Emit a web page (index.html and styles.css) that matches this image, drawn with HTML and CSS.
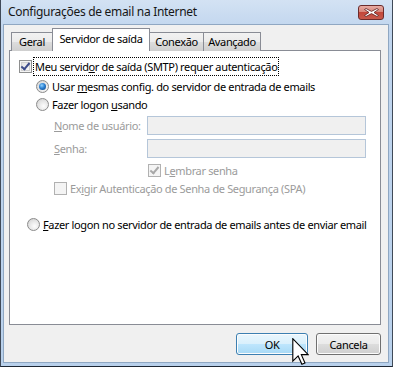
FILE: index.html
```html
<!DOCTYPE html>
<html lang="pt">
<head>
    <meta charset="UTF-8">
    <title>Configurações de email na Internet</title>
    <link rel="stylesheet" href="styles.css">
</head>
<body>
    <div class="window">
        <div class="titlebar">
            <span class="title">Configurações de email na Internet</span>
            <div class="close-button">
                <svg width="15" height="9" viewBox="0 0 15 9">
                    <path d="M2 0.5 L7.5 3.4 L13 0.5 L14.5 1.5 L10 4.5 L14.5 7.5 L13 8.5 L7.5 5.6 L2 8.5 L0.5 7.5 L5 4.5 L0.5 1.5 Z" fill="#fff" stroke="#5a2020" stroke-width="0.8"/>
                </svg>
            </div>
        </div>
        <div class="client">
            <div class="tabs">
                <div class="tab tab-general">Geral</div>
                <div class="tab selected">Servidor de saída</div>
                <div class="tab tab-connection">Conexão</div>
                <div class="tab tab-advanced">Avançado</div>
            </div>
            <div class="panel">
                <div class="row first">
                    <span class="checkbox checked"></span>
                    <span class="label focus">Meu servid<u>o</u>r de saída (SMTP) requer autenticação</span>
                </div>
                <div class="row indent">
                    <span class="radio checked"></span>
                    <span class="label">Usar <u>m</u>esmas config. do servidor de entrada de emails</span>
                </div>
                <div class="row indent">
                    <span class="radio"></span>
                    <span class="label">Fazer logon <u>u</u>sando</span>
                </div>
                <div class="field first-field">
                    <span class="field-label disabled"><u>N</u>ome de usuário:</span>
                    <span class="input"></span>
                </div>
                <div class="field">
                    <span class="field-label disabled"><u>S</u>enha:</span>
                    <span class="input"></span>
                </div>
                <div class="row remember">
                    <span class="checkbox disabled-check"></span>
                    <span class="label disabled">L<u>e</u>mbrar senha</span>
                </div>
                <div class="row spa">
                    <span class="checkbox disabled-box"></span>
                    <span class="label disabled">Ex<u>i</u>gir Autenticação de Senha de Segurança (SPA)</span>
                </div>
                <div class="row last">
                    <span class="radio"></span>
                    <span class="label"><u>F</u>azer logon no servidor de entrada de emails antes de enviar email</span>
                </div>
            </div>
            <div class="buttons">
                <button class="button default">OK</button>
                <button class="button">Cancela</button>
            </div>
            <svg class="cursor" width="17" height="28" viewBox="0 0 12 20">
                <path d="M0.5 0.5 L0.5 16.5 L4.3 12.8 L7 18.8 L9.2 17.8 L6.6 11.9 L11.5 11.9 Z" fill="#fff" stroke="#000" stroke-width="0.8" stroke-linejoin="miter"/>
            </svg>
        </div>
    </div>
</body>
</html>
```

FILE: styles.css
```css
body {
    margin: 0;
    background: #fff;
    font-family: "Noto Sans", "Open Sans", sans-serif;
    font-size: 11px;
    letter-spacing: -0.35px;
    color: #000;
}
.window {
    width: 393px;
    height: 367px;
    box-sizing: border-box;
    display: flex;
    flex-direction: column;
    background: linear-gradient(to bottom, #d3e2f3, #c0d5ee 30px, #b9d1ec);
    border-left: 1px solid #404a58;
    border-right: 1px solid #404a58;
    border-bottom: 1px solid #1d2734;
    padding: 0 3px 3px 2px;
}
.titlebar {
    height: 24px;
    flex-shrink: 0;
    display: flex;
    align-items: center;
    position: relative;
}
.title {
    margin-left: 5px;
    margin-top: -1px;
    font-size: 12px;
    letter-spacing: -0.3px;
    color: #161616;
}
.close-button {
    position: absolute;
    right: 5px;
    top: 5px;
    width: 24px;
    height: 13px;
    border: 1px solid #6b2b2b;
    border-radius: 3px;
    background: linear-gradient(to bottom, #e8aca4 0%, #d7867a 45%, #c3473a 50%, #c8594b 100%);
    display: flex;
    align-items: center;
    justify-content: center;
}
.client {
    flex: 1;
    position: relative;
    background: #f0f0f0;
    border: 1px solid #8fa7c2;
    padding: 3px 7px 0 5px;
    display: flex;
    flex-direction: column;
}
.tabs {
    display: flex;
    align-items: flex-end;
    height: 23px;
    padding-left: 2px;
    position: relative;
    z-index: 1;
    margin-bottom: -1px;
}
.tab {
    height: 19px;
    box-sizing: border-box;
    padding-bottom: 1px;
    border: 1px solid #898c95;
    border-bottom: none;
    border-left: none;
    background: linear-gradient(to bottom, #f2f2f2, #ebebeb 50%, #dddddd 50%, #cfcfcf);
    display: flex;
    align-items: center;
    justify-content: center;
    line-height: 1;
}
.tab-general {
    width: 42px;
    border-left: 1px solid #898c95;
}
.tab.selected {
    width: 98px;
    height: 23px;
    background: #fff;
    border-left: 1px solid #898c95;
    margin-left: -1px;
    padding-bottom: 4px;
    position: relative;
    z-index: 2;
}
.tab-connection {
    width: 54px;
}
.tab-advanced {
    width: 57px;
}
.panel {
    height: 275px;
    box-sizing: border-box;
    background: #fff;
    border: 1px solid #898c95;
    padding: 6px 0 0 9px;
    display: flex;
    flex-direction: column;
}
.row {
    height: 18px;
    display: flex;
    align-items: center;
}
.row .label {
    margin-left: 3px;
    white-space: nowrap;
}
.label.focus {
    outline: 1px dotted #000;
    outline-offset: 1px;
}
.indent {
    padding-left: 17px;
    margin-top: 2px;
}
.indent + .indent {
    margin-top: 0;
}
.checkbox {
    width: 13px;
    height: 13px;
    box-sizing: border-box;
    border: 1px solid #8e8f8f;
    background: linear-gradient(135deg, #dcdcdc, #fff);
    box-shadow: inset 0 0 0 1px #f4f4f4, inset 0 0 0 2px #d0d0d0;
    position: relative;
    flex-shrink: 0;
}
.checkbox.checked::after,
.checkbox.disabled-check::after {
    content: "";
    position: absolute;
    left: 3px;
    top: 0px;
    width: 3px;
    height: 7px;
    border: solid #3c4b8a;
    border-width: 0 2px 2px 0;
    transform: rotate(40deg);
}
.checkbox.disabled-check,
.checkbox.disabled-box {
    border-color: #b1b1b1;
    background: #f4f4f4;
    box-shadow: none;
}
.checkbox.disabled-check::after {
    border-color: #a8a8a8;
}
.radio {
    width: 13px;
    height: 13px;
    box-sizing: border-box;
    border-radius: 50%;
    border: 1px solid #8b8b8b;
    background: radial-gradient(circle at 60% 65%, #fdfdfd 0%, #e4e4e4 55%, #c9c9c9 100%);
    position: relative;
    flex-shrink: 0;
}
.radio.checked::after {
    content: "";
    position: absolute;
    left: 2px;
    top: 2px;
    width: 7px;
    height: 7px;
    border-radius: 50%;
    background: radial-gradient(circle at 40% 35%, #8fd2ff 0%, #2b7fd1 45%, #0c3d77 100%);
}
.disabled {
    color: #9b9b9b;
}
.field {
    display: flex;
    align-items: center;
    height: 19px;
    padding-left: 35px;
    margin-top: 4px;
}
.first-field {
    margin-top: 3px;
}
.field-label {
    width: 93px;
}
.input {
    width: 219px;
    height: 19px;
    box-sizing: border-box;
    border: 1px solid #b5c6d9;
    background: #f0f0f0;
}
.remember {
    padding-left: 129px;
    margin-top: 3px;
}
.spa {
    padding-left: 35px;
}
.last {
    padding-left: 8px;
    margin-top: 18px;
}
.buttons {
    display: flex;
    justify-content: flex-end;
    gap: 8px;
    margin-top: 8px;
}
.button {
    height: 22px;
    box-sizing: border-box;
    border: 1px solid #707070;
    border-radius: 3px;
    background: linear-gradient(to bottom, #f2f2f2, #ebebeb 50%, #dddddd 50%, #cfcfcf);
    box-shadow: inset 0 0 0 1px #fcfcfc;
    font-family: inherit;
    font-size: 11px;
    letter-spacing: inherit;
    padding: 0;
    width: 65px;
}
.button.default {
    width: 72px;
    border-color: #3c7fb1;
    background: linear-gradient(to bottom, #eaf6fd, #d9f0fc 50%, #bee6fd 50%, #a7d9f5);
}
.cursor {
    position: absolute;
    left: 288px;
    top: 313px;
}
```
